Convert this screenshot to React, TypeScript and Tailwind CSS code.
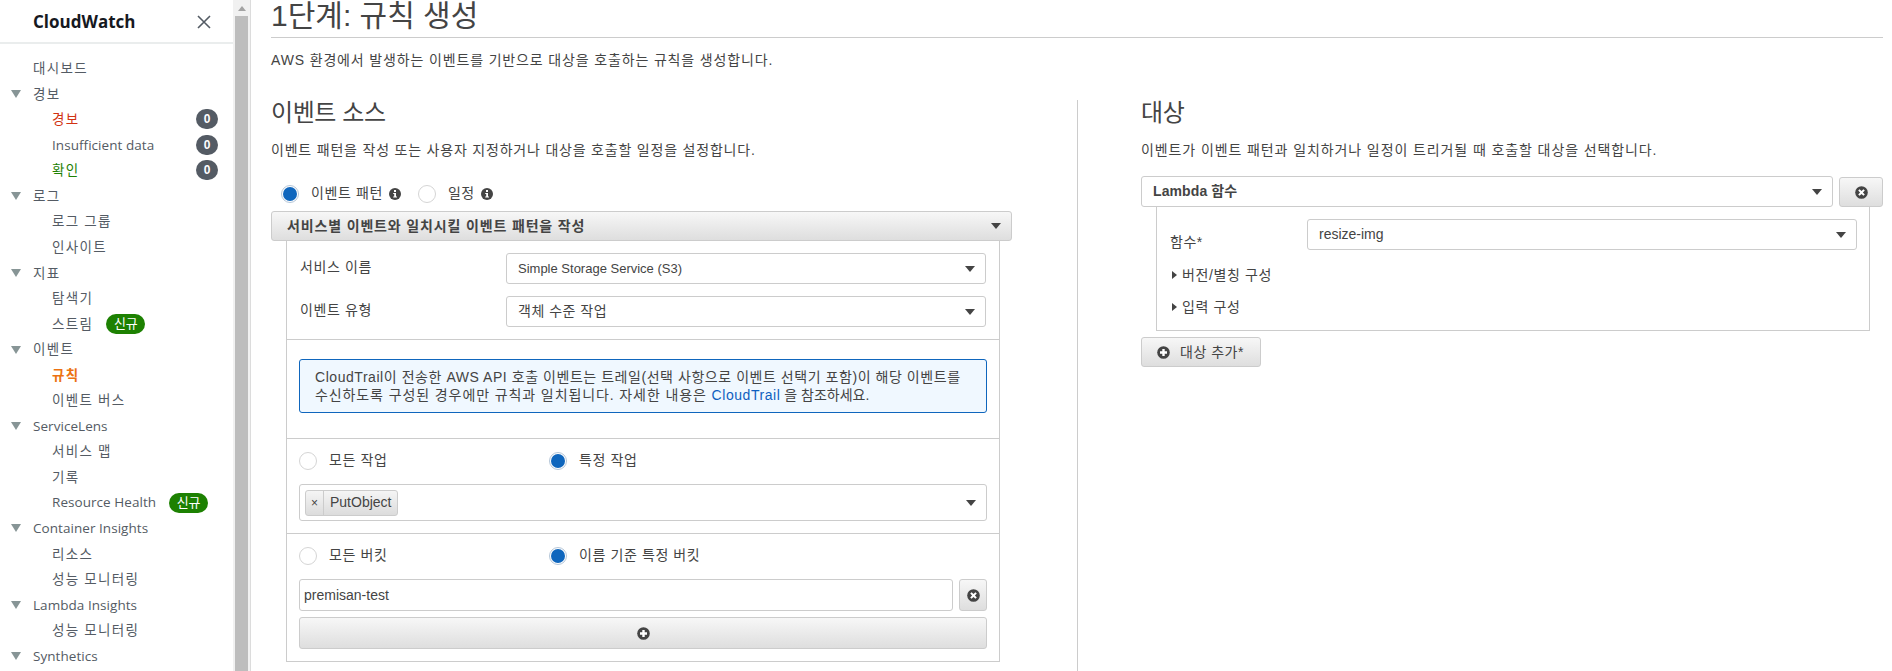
import React from 'react';

const FONT = "font-['Liberation_Sans','Noto_Sans_CJK_KR',sans-serif]";

function Caret({ className = '' }: { className?: string }) {
  return (
    <svg width="10" height="6" viewBox="0 0 10 6" className={className}>
      <path d="M0 0h10L5 6z" fill="#444" />
    </svg>
  );
}

function InfoIcon() {
  return (
    <svg width="12" height="12" viewBox="0 0 12 12" className="inline-block">
      <circle cx="6" cy="6" r="6" fill="#444" />
      <rect x="5" y="2" width="2" height="2" fill="#fff" />
      <path d="M4.2 5h2.8v3.6h1v1H4.2v-1h1V6h-1z" fill="#fff" />
    </svg>
  );
}

function PlusIcon() {
  return (
    <svg width="13" height="13" viewBox="0 0 13 13">
      <circle cx="6.5" cy="6.5" r="6.3" fill="#444" />
      <path d="M5.3 3h2.4v2.3H10v2.4H7.7V10H5.3V7.7H3V5.3h2.3z" fill="#fff" />
    </svg>
  );
}

function CloseIcon() {
  return (
    <svg width="13" height="13" viewBox="0 0 13 13">
      <circle cx="6.5" cy="6.5" r="6.3" fill="#444" />
      <path d="M4.6 3.2l1.9 1.9 1.9-1.9 1.4 1.4-1.9 1.9 1.9 1.9-1.4 1.4-1.9-1.9-1.9 1.9-1.4-1.4 1.9-1.9-1.9-1.9z" fill="#fff" />
    </svg>
  );
}

function Radio({ checked = false, label, info = false }: { checked?: boolean; label: string; info?: boolean }) {
  return (
    <div className="flex items-center">
      {checked ? (
        <span className="flex h-[18px] w-[18px] items-center justify-center rounded-full border border-[#b5c6d8]">
          <span className="h-[14px] w-[14px] rounded-full bg-[#0f66bd]" />
        </span>
      ) : (
        <span className="h-[18px] w-[18px] rounded-full border border-[#d5d5d5]" />
      )}
      <span className="ml-[12px] pb-[1px] text-[14px] tracking-[0.6px] text-[#444]">{label}</span>
      {info && (
        <span className="ml-[6px] flex">
          <InfoIcon />
        </span>
      )}
    </div>
  );
}

function Select({ value, textClass = 'text-[14px] tracking-[0.5px]', className = '' }: { value: string; textClass?: string; className?: string }) {
  return (
    <div className={`flex h-[31px] items-center justify-between rounded-[3px] border border-[#ccc] bg-white pl-[11px] pr-[10px] ${className}`}>
      <span className={`text-[#444] ${textClass}`}>{value}</span>
      <Caret />
    </div>
  );
}

type NavItem = { label: string; level: 0 | 1; arrow?: boolean; color?: string; count?: number; isNew?: boolean; bold?: boolean };

const navItems: NavItem[] = [
  { label: '대시보드', level: 0 },
  { label: '경보', level: 0, arrow: true },
  { label: '경보', level: 1, color: 'text-[#d13212]', count: 0 },
  { label: 'Insufficient data', level: 1, count: 0 },
  { label: '확인', level: 1, color: 'text-[#1d8102]', count: 0 },
  { label: '로그', level: 0, arrow: true },
  { label: '로그 그룹', level: 1 },
  { label: '인사이트', level: 1 },
  { label: '지표', level: 0, arrow: true },
  { label: '탐색기', level: 1 },
  { label: '스트림', level: 1, isNew: true },
  { label: '이벤트', level: 0, arrow: true },
  { label: '규칙', level: 1, color: 'text-[#ec7211]', bold: true },
  { label: '이벤트 버스', level: 1 },
  { label: 'ServiceLens', level: 0, arrow: true },
  { label: '서비스 맵', level: 1 },
  { label: '기록', level: 1 },
  { label: 'Resource Health', level: 1, isNew: true },
  { label: 'Container Insights', level: 0, arrow: true },
  { label: '리소스', level: 1 },
  { label: '성능 모니터링', level: 1 },
  { label: 'Lambda Insights', level: 0, arrow: true },
  { label: '성능 모니터링', level: 1 },
  { label: 'Synthetics', level: 0, arrow: true },
];

function NewBadge() {
  return (
    <span className="ml-[13px] flex h-[20px] w-[39px] items-center justify-center rounded-full bg-[#1d8102] text-[13px] tracking-[-0.2px] text-white">
      신규
    </span>
  );
}

function Sidebar() {
  return (
    <aside className="w-[233px] shrink-0">
      <div className="flex h-[44px] items-center justify-between border-b-2 border-[#eaeded] pl-[33px] pr-[22px] pt-[2px]">
        <span className="text-[17px] font-bold text-[#16191f] font-['Open_Sans',sans-serif]">CloudWatch</span>
        <svg width="14" height="14" viewBox="0 0 14 14">
          <path d="M1 1l12 12M13 1L1 13" stroke="#545b64" strokeWidth="1.6" />
        </svg>
      </div>
      <nav className="pt-[11.5px]">
        {navItems.map((item, i) => (
          <div key={i} className="relative flex h-[25.55px] items-center pr-[15px]">
            {item.arrow && (
              <svg width="10" height="8" viewBox="0 0 10 8" className="absolute left-[11px] top-[9px]">
                <path d="M0 0h10L5 8z" fill="#879596" />
              </svg>
            )}
            <span
              className={`font-['Open_Sans','Noto_Sans_CJK_KR',sans-serif] text-[13.5px] ${/[가-힣]/.test(item.label) ? 'tracking-[1.3px]' : 'tracking-[0.05px]'} ${item.level === 0 ? 'ml-[33px]' : 'ml-[52px]'} ${item.color ?? 'text-[#545b64]'} ${item.bold ? 'font-bold' : ''}`}
            >
              {item.label}
            </span>
            {item.isNew && <NewBadge />}
            {item.count !== undefined && (
              <span className="ml-auto flex h-[20px] w-[22px] items-center justify-center rounded-full bg-[#545b64] text-[12px] font-bold text-white">
                {item.count}
              </span>
            )}
          </div>
        ))}
      </nav>
    </aside>
  );
}

function Scrollbar() {
  return (
    <div className="flex w-[18px] shrink-0 flex-col border-r border-[#dcdcdc] bg-[#f1f1f1] pl-[2px] pr-[2px]">
      <div className="flex h-[16px] items-center justify-center">
        <svg width="8" height="5" viewBox="0 0 8 5">
          <path d="M4 0l4 5H0z" fill="#a3a3a3" />
        </svg>
      </div>
      <div className="w-[13px] flex-1 bg-[#bdbdbd]" />
    </div>
  );
}

function EventSource() {
  return (
    <div className="w-[741px]">
      <h2 className="pt-[2px] text-[24px] leading-[22px] tracking-[-0.4px] text-[#444]">이벤트 소스</h2>
      <p className="mt-[16px] text-[14px] leading-[20px] tracking-[0.8px] text-[#444]">
        이벤트 패턴을 작성 또는 사용자 지정하거나 대상을 호출할 일정을 설정합니다.
      </p>
      <div className="mt-[24px] flex h-[20px] items-center gap-[17px] pl-[10px]">
        <Radio checked label="이벤트 패턴" info />
        <Radio label="일정" info />
      </div>
      <button className="mt-[7px] flex h-[30px] w-full items-center justify-between rounded-[3px] border border-[#ccc] bg-gradient-to-b from-[#f7f7f7] to-[#dedede] pl-[15px] pr-[10px]">
        <span className="text-[14px] font-bold tracking-[0.85px] text-[#444]">서비스별 이벤트와 일치시킬 이벤트 패턴을 작성</span>
        <Caret />
      </button>

      <div className="ml-[15px] mr-[12px] border-x border-b border-[#ccc]">
        <div className="flex flex-col gap-[12px] px-[13px] py-[12px]">
          <div className="flex items-center">
            <span className="w-[206px] pb-[3px] text-[14px] tracking-[0.6px] text-[#444]">서비스 이름</span>
            <Select value="Simple Storage Service (S3)" textClass="text-[13px]" className="flex-1" />
          </div>
          <div className="flex items-center">
            <span className="w-[206px] pb-[3px] text-[14px] tracking-[0.6px] text-[#444]">이벤트 유형</span>
            <Select value="객체 수준 작업" className="flex-1" />
          </div>
        </div>

        <div className="border-t border-[#ccc] px-[12px] pb-[25px] pt-[19px]">
          <div className="whitespace-nowrap rounded-[3px] border border-[#0f66bd] bg-[#f0f8ff] pl-[15px] py-[8px] text-[14px] leading-[18px] tracking-[0.55px] text-[#444]">
            CloudTrail이 전송한 AWS API 호출 이벤트는 트레일(선택 사항으로 이벤트 선택기 포함)이 해당 이벤트를
            <br />
            <span className="tracking-[0.9px]">수신하도록 구성된 경우에만 규칙과 일치됩니다. 자세한 내용은 </span>
            <span className="text-[#0f5fc0]">CloudTrail</span>
            <span className="tracking-[0px]"> 을 참조하세요.</span>
          </div>
        </div>

        <div className="border-t border-[#ccc] px-[12px] pb-[12px] pt-[12px]">
          <div className="flex h-[20px] items-center">
            <div className="w-[250px]"><Radio label="모든 작업" /></div>
            <Radio checked label="특정 작업" />
          </div>
          <div className="mt-[13px] flex h-[37px] items-center justify-between rounded-[3px] border border-[#ccc] pl-[5px] pr-[10px]">
            <div className="flex h-[26px] items-stretch rounded-[3px] border border-[#ccc] bg-gradient-to-b from-[#f5f5f5] to-[#dcdcdc]">
              <span className="flex w-[18px] items-center justify-center border-r border-[#ccc] text-[12px] text-[#444]">×</span>
              <span className="flex items-center px-[6px] text-[14px] text-[#444]">PutObject</span>
            </div>
            <Caret />
          </div>
        </div>

        <div className="border-t border-[#ccc] px-[12px] pb-[12px] pt-[12px]">
          <div className="flex h-[20px] items-center">
            <div className="w-[250px]"><Radio label="모든 버킷" /></div>
            <Radio checked label="이름 기준 특정 버킷" />
          </div>
          <div className="mt-[13px] flex gap-[6px]">
            <div className="flex h-[32px] flex-1 items-center rounded-[3px] border border-[#ccc] pl-[4px] text-[14px] text-[#444]">
              premisan-test
            </div>
            <button className="flex h-[32px] w-[28px] items-center justify-center rounded-[3px] border border-[#ccc] bg-gradient-to-b from-[#f7f7f7] to-[#dedede]">
              <CloseIcon />
            </button>
          </div>
          <button className="mt-[6px] flex h-[32px] w-full items-center justify-center rounded-[3px] border border-[#ccc] bg-gradient-to-b from-[#f7f7f7] to-[#dedede]">
            <PlusIcon />
          </button>
        </div>
      </div>
    </div>
  );
}

function Target() {
  return (
    <div className="border-l border-[#ccc] pl-[63px]">
      <h2 className="pt-[2px] text-[24px] leading-[22px] tracking-[-0.4px] text-[#444]">대상</h2>
      <p className="mt-[16px] text-[14px] leading-[20px] tracking-[0.9px] text-[#444]">
        이벤트가 이벤트 패턴과 일치하거나 일정이 트리거될 때 호출할 대상을 선택합니다.
      </p>
      <div className="mt-[16px] flex gap-[6px]">
        <Select value="Lambda 함수" textClass="text-[14px] font-bold tracking-[0.1px]" className="flex-1" />
        <button className="mt-[1px] flex h-[30px] w-[44px] items-center justify-center rounded-[3px] border border-[#ccc] bg-gradient-to-b from-[#f7f7f7] to-[#dedede]">
          <CloseIcon />
        </button>
      </div>
      <div className="ml-[15px] mr-[13px] border-x border-b border-[#ccc] pb-[13px] pl-[13px] pr-[12px] pt-[12px]">
        <div className="flex h-[31px]">
          <span className="w-[137px] pt-[13px] text-[14px] leading-[20px] tracking-[0.5px] text-[#444]">함수*</span>
          <Select value="resize-img" textClass="text-[14px]" className="flex-1" />
        </div>
        <div className="mt-[15px] flex h-[20px] items-center gap-[5px] pl-[2px] text-[14px] tracking-[0.6px] text-[#444]">
          <svg width="5" height="8" viewBox="0 0 5 8"><path d="M0 0l5 4-5 4z" fill="#444" /></svg>
          버전/별칭 구성
        </div>
        <div className="mt-[12px] flex h-[20px] items-center gap-[5px] pl-[2px] text-[14px] tracking-[0.6px] text-[#444]">
          <svg width="5" height="8" viewBox="0 0 5 8"><path d="M0 0l5 4-5 4z" fill="#444" /></svg>
          입력 구성
        </div>
      </div>
      <button className="mt-[6px] flex h-[30px] w-[120px] items-center rounded-[3px] border border-[#ccc] bg-gradient-to-b from-[#f7f7f7] to-[#dedede] pl-[15px]">
        <PlusIcon />
        <span className="ml-[10px] text-[14px] tracking-[0.5px] text-[#444]">대상 추가*</span>
      </button>
    </div>
  );
}

export default function App() {
  return (
    <div className={`flex h-screen overflow-hidden bg-white ${FONT}`}>
      <Sidebar />
      <Scrollbar />
      <main className="ml-[20px] mr-[9px] flex min-w-0 flex-1 flex-col">
        <div className="flex h-[38px] shrink-0 items-center border-b border-[#ccc]">
          <h1 className="mb-[5px] text-[30px] leading-[30px] text-[#444]">1단계: 규칙 생성</h1>
        </div>
        <p className="mt-[12px] text-[14px] leading-[20px] tracking-[0.85px] text-[#444]">
          AWS 환경에서 발생하는 이벤트를 기반으로 대상을 호출하는 규칙을 생성합니다.
        </p>
        <div className="mt-[30px] grid flex-1 grid-cols-[806px_1fr]">
          <EventSource />
          <Target />
        </div>
      </main>
    </div>
  );
}
